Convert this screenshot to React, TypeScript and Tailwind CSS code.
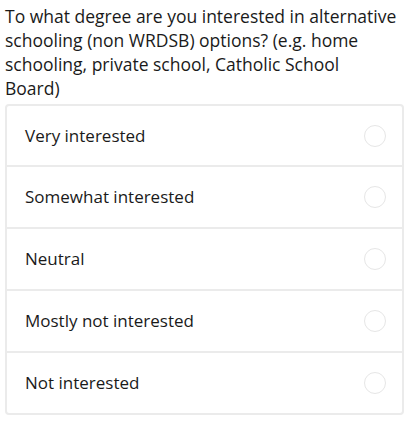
const OPTIONS = [
  "Very interested",
  "Somewhat interested",
  "Neutral",
  "Mostly not interested",
  "Not interested",
];

export default function App() {
  return (
    <div className="min-h-screen bg-white px-[5px] pt-[4px] text-[#1a1a1a] font-['Open_Sans',sans-serif]">
      <h2 className="text-[17.5px] leading-[24px]">
        To what degree are you interested in alternative schooling (non WRDSB) options? (e.g. home schooling, private school, Catholic School
        <br />
        Board)
      </h2>
      <div className="mt-[4px] w-[399px] rounded-[4px] border-2 border-[#ebebeb]">
        {OPTIONS.map((opt, i) => (
          <label
            key={opt}
            className={`flex items-center justify-between pl-[18px] pr-[16px] ${i > 0 ? "h-[62px] border-t-2 border-[#ebebeb]" : "h-[59px]"}`}
          >
            <span className="text-[17px]">{opt}</span>
            <span className="h-[22px] w-[22px] rounded-full border border-[#e6e6e6]" />
          </label>
        ))}
      </div>
    </div>
  );
}
